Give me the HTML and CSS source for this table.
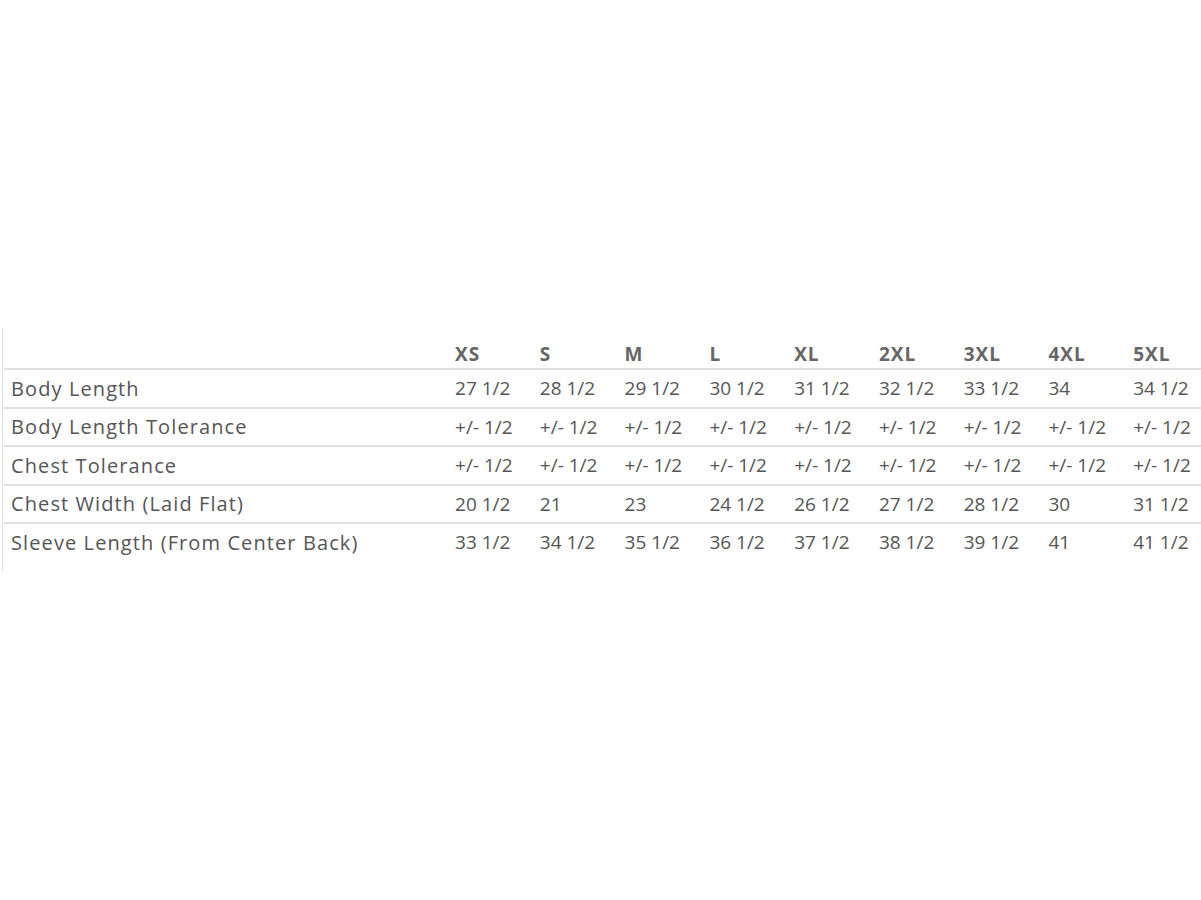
FILE: index.html
```html
<!DOCTYPE html>
<html>
<head>
<meta charset="utf-8">
<link rel="stylesheet" href="styles.css">
</head>
<body>
<div class="wrap">
  <table class="chart">
    <colgroup>
      <col class="col-label">
      <col class="col-size"><col class="col-size"><col class="col-size"><col class="col-size"><col class="col-size"><col class="col-size"><col class="col-size"><col class="col-size"><col class="col-size">
    </colgroup>
    <thead>
      <tr>
        <th class="label"></th>
        <th>XS</th><th>S</th><th>M</th><th>L</th><th>XL</th><th>2XL</th><th>3XL</th><th>4XL</th><th>5XL</th>
      </tr>
    </thead>
    <tbody>
      <tr><td class="label">Body Length</td><td>27 1/2</td><td>28 1/2</td><td>29 1/2</td><td>30 1/2</td><td>31 1/2</td><td>32 1/2</td><td>33 1/2</td><td>34</td><td>34 1/2</td></tr>
      <tr><td class="label">Body Length Tolerance</td><td>+/- 1/2</td><td>+/- 1/2</td><td>+/- 1/2</td><td>+/- 1/2</td><td>+/- 1/2</td><td>+/- 1/2</td><td>+/- 1/2</td><td>+/- 1/2</td><td>+/- 1/2</td></tr>
      <tr><td class="label">Chest Tolerance</td><td>+/- 1/2</td><td>+/- 1/2</td><td>+/- 1/2</td><td>+/- 1/2</td><td>+/- 1/2</td><td>+/- 1/2</td><td>+/- 1/2</td><td>+/- 1/2</td><td>+/- 1/2</td></tr>
      <tr><td class="label">Chest Width (Laid Flat)</td><td>20 1/2</td><td>21</td><td>23</td><td>24 1/2</td><td>26 1/2</td><td>27 1/2</td><td>28 1/2</td><td>30</td><td>31 1/2</td></tr>
      <tr><td class="label">Sleeve Length (From Center Back)</td><td>33 1/2</td><td>34 1/2</td><td>35 1/2</td><td>36 1/2</td><td>37 1/2</td><td>38 1/2</td><td>39 1/2</td><td>41</td><td>41 1/2</td></tr>
    </tbody>
  </table>
</div>
</body>
</html>
```
FILE: styles.css
```css
html {
  overflow: hidden;
}
body {
  margin: 0;
  background: #fff;
  font-family: "Open Sans", "Liberation Sans", sans-serif;
  color: #555;
}
.wrap {
  margin: 328px 0 0 2px;
  padding: 0 0 9px 1px;
  border-left: 1px solid #e2e2e2;
  width: 1212px;
}
.chart {
  border-collapse: collapse;
  table-layout: fixed;
  width: 1206px;
  font-size: 19px;
}
.col-label {
  width: 443px;
}
.col-size {
  width: 84.75px;
}
.chart th,
.chart td {
  text-align: left;
  padding: 0 0 0 8px;
  white-space: nowrap;
  overflow: visible;
}
.chart .label {
  padding-left: 7px;
  font-size: 20px;
  letter-spacing: 1.1px;
}
.chart thead th {
  height: 29px;
  padding-top: 11px;
  font-weight: 700;
  color: #666;
  letter-spacing: 1px;
  border-bottom: 2px solid #e0e0e0;
  vertical-align: middle;
}
.chart tbody td {
  height: 36.5px;
  padding-top: 0;
  padding-bottom: 0;
  border-bottom: 2px solid #e0e0e0;
  vertical-align: middle;
}
.chart tbody tr:last-child td {
  border-bottom: none;
}
```
